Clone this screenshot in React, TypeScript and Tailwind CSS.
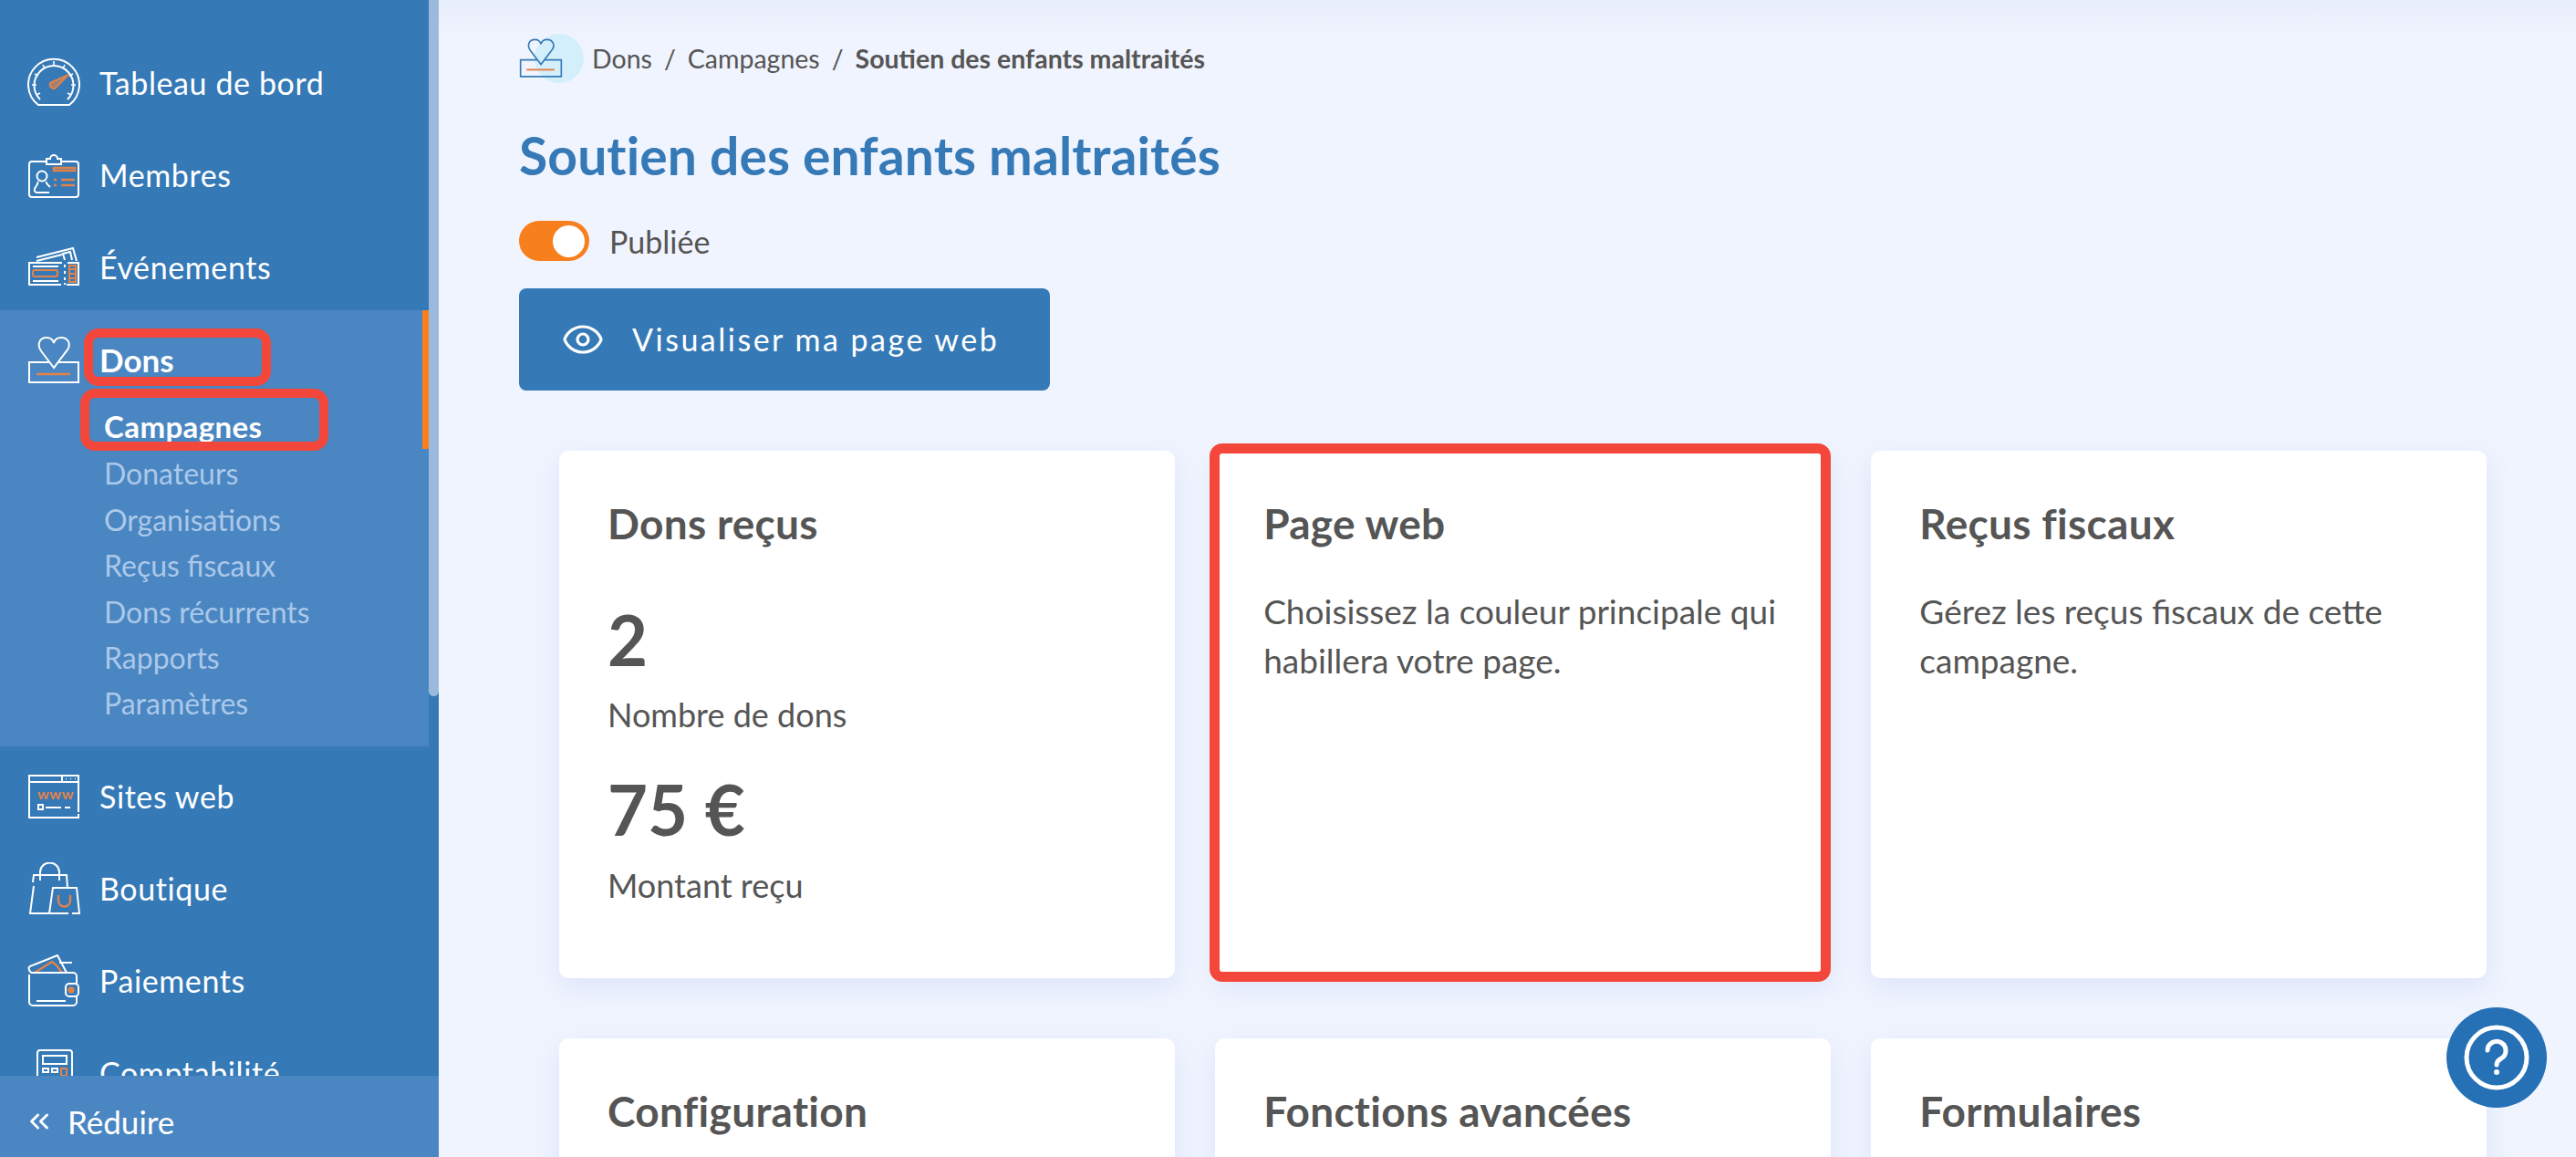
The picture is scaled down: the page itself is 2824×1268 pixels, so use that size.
import { ChevronsLeft, Eye } from 'lucide-react';

const ORANGE = '#e2834a';

function GaugeIcon() {
  return (
    <svg width="58" height="58" viewBox="0 0 58 58" fill="none" stroke="white" strokeWidth="2" className="shrink-0">
      <path d="M12 53 A28 28 0 1 1 46 53 Z" />
      <path d="M14 47 A21.5 21.5 0 1 1 44 47" />
      <path d="M29 5 V10 M17 9 l2 4 M41 9 l-2 4 M8 19 l4 2 M50 19 l-4 2 M5 31 h5 M53 31 h-5 M10 42 l4 -2 M48 42 l-4 -2" strokeWidth="1.6" />
      <path d="M25 29 L45 20 L30 35 A4.5 4.5 0 0 1 25 29 Z" stroke={ORANGE} fill={ORANGE} fillOpacity="0.6" />
    </svg>
  );
}

function BadgeIcon() {
  return (
    <svg width="58" height="58" viewBox="0 0 58 58" fill="none" stroke="white" strokeWidth="2" className="shrink-0">
      <path d="M20 14 H5 a3 3 0 0 0 -3 3 V50 a3 3 0 0 0 3 3 H53 a3 3 0 0 0 3 -3 V17 a3 3 0 0 0 -3 -3 H38" />
      <path d="M21 17 V11 H25 a4 4 0 0 1 8 0 H37 V17 Z" />
      <circle cx="16" cy="30" r="5.5" />
      <path d="M11 36 C13 38 9 41 8 44 C7 47 9 48 11 48 H24 M21 36 C20 38 23 40 25 42" />
      <g stroke={ORANGE} strokeWidth="2.4">
        <rect x="29" y="21" width="23" height="3" />
        <path d="M37 34 H52 M37 40 H52 M29 34 h3 M29 40 h3" />
      </g>
    </svg>
  );
}

function TicketIcon() {
  return (
    <svg width="58" height="58" viewBox="0 0 58 58" fill="none" stroke="white" strokeWidth="2" className="shrink-0">
      <path d="M10 18 L50 8 L54 22 M41 21 L39 14 L47 12 L49 21 M10 22 L38 15" />
      <path d="M38 24 H2 V48 H37 M43 48 H56 V24 H44" />
      <path d="M6 44 H34 M6 28 H34 M41 26 V29 M41 33 V36 M41 40 V43 M41 46 V48" />
      <rect x="6" y="32" width="27" height="7" rx="2" stroke={ORANGE} />
      <path d="M46 27 H53 V45 H46 Z M46 31 H53 M46 36 H53 M46 41 H53" stroke={ORANGE} />
    </svg>
  );
}

function DonationIcon({ color = 'white' }: { color?: string }) {
  return (
    <svg width="58" height="58" viewBox="0 0 58 58" fill="none" stroke={color} strokeWidth="2" className="h-full w-full">
      <path d="M29 37 L16 20 C9 11 14 4 21 4 C25 4 28 6 29 10 C30 6 33 4 37 4 C44 4 50 11 42 20 Z" />
      <path d="M24 31 H2 V53 H56 V31 H34" />
      <path d="M10 44 H47" stroke={ORANGE} strokeWidth="2.4" />
    </svg>
  );
}

function WebIcon() {
  return (
    <svg width="58" height="58" viewBox="0 0 58 58" fill="none" stroke="white" strokeWidth="2" className="shrink-0">
      <path d="M56 46 V6 H2 V52 H56 V48 M2 13 H56 M38 6 V13" />
      <path d="M42 9.5 h1 M47 9.5 h1 M52 9.5 h1" strokeWidth="1.6" />
      <text x="11" y="32" fill={ORANGE} stroke="none" fontSize="16" fontWeight="700" fontFamily="Lato, sans-serif" letterSpacing="0.5">www</text>
      <rect x="12" y="38" width="5" height="5" />
      <path d="M20 41 H37 M41 41 H47" />
    </svg>
  );
}

function BagIcon() {
  return (
    <svg width="58" height="58" viewBox="0 0 58 58" fill="none" stroke="white" strokeWidth="2" className="shrink-0">
      <path d="M7 28 L3 58 H45 M49 58 H57 L54 30 H28 L24 58 M44 30 L43 16 H7 L6 24" transform="translate(0 -2)" />
      <path d="M14 20 V11 a10 10 0 0 1 21 0 V20" />
      <path d="M34 36 V42 a6 6 0 0 0 13 0 V36" stroke={ORANGE} strokeWidth="2.4" />
    </svg>
  );
}

function WalletIcon() {
  return (
    <svg width="58" height="58" viewBox="0 0 58 58" fill="none" stroke="white" strokeWidth="2" className="shrink-0">
      <path d="M4 20 C-1 14 2 13 8 11 L33 1 L43 20 M35 9 H49" />
      <path d="M8 20 L27 8 L32 12 L38 20" stroke={ORANGE} strokeWidth="2.4" />
      <path d="M2 22 V52 a4 4 0 0 0 4 4 H50 a4 4 0 0 0 4 -4 V46 M54 32 V24 a4 4 0 0 0 -4 -4 H4" />
      <rect x="42" y="32" width="14" height="14" rx="4" />
      <circle cx="48" cy="39" r="2.6" fill={ORANGE} stroke={ORANGE} />
      <path d="M10 51 H42" />
    </svg>
  );
}

function CalcIcon() {
  return (
    <svg width="58" height="58" viewBox="0 0 58 58" fill="none" stroke="white" strokeWidth="2" className="shrink-0">
      <rect x="11" y="4" width="38" height="50" rx="3" />
      <rect x="17" y="10" width="26" height="9" />
      <path d="M17 28 V24 H23 V28 Z M27 28 V24 H33 V28 Z" />
      <path d="M37 32 V24 H43 V32 Z" stroke={ORANGE} />
    </svg>
  );
}

const topItems = [
  { label: 'Tableau de bord', icon: GaugeIcon },
  { label: 'Membres', icon: BadgeIcon },
  { label: 'Événements', icon: TicketIcon },
];

const bottomItems = [
  { label: 'Sites web', icon: WebIcon },
  { label: 'Boutique', icon: BagIcon },
  { label: 'Paiements', icon: WalletIcon },
  { label: 'Comptabilité', icon: CalcIcon },
];

const subItems = ['Donateurs', 'Organisations', 'Reçus fiscaux', 'Dons récurrents', 'Rapports', 'Paramètres'];

function NavItem({ label, icon: Icon }: { label: string; icon: () => React.ReactElement }) {
  return (
    <a className="flex h-[101px] shrink-0 items-center gap-[21px] pl-[30px] pt-[6px] text-[34px] tracking-[0.6px] text-white">
      <Icon />
      <span>{label}</span>
    </a>
  );
}

function Sidebar() {
  return (
    <aside className="relative flex h-full w-[481px] shrink-0 flex-col overflow-hidden bg-[#3579b7]">
      <nav className="min-h-0 flex-1 overflow-hidden pt-[37px] pr-[11px]">
        {topItems.map((item) => (
          <NavItem key={item.label} {...item} />
        ))}

        {/* Dons, open */}
        <div className="relative h-[478px] bg-[#4a86c1]">
          <div className="absolute right-0 top-0 h-[152px] w-[7px] bg-[#f77f1d]" />
          <div className="flex h-[103px] items-center gap-[21px] pl-[30px] pt-[6px] text-[35px] font-bold text-white">
            <span className="h-[58px] w-[58px] shrink-0">
              <DonationIcon />
            </span>
            <span>Dons</span>
          </div>
          <div className="pl-[114px] text-[32px] leading-[50.4px] text-[#abc8ea]">
            <div className="-mt-[1px] text-[33px] font-bold tracking-[0.4px] text-white">Campagnes</div>
            <div className="pt-[2px]">
              {subItems.map((s) => (
                <div key={s}>{s}</div>
              ))}
            </div>
          </div>
          {/* annotation boxes */}
          <div className="absolute left-[92px] top-[20px] h-[63px] w-[205px] rounded-[16px] border-[10px] border-[#f4473b]" />
          <div className="absolute left-[88px] top-[86px] h-[68px] w-[272px] rounded-[16px] border-[10px] border-[#f4473b]" />
        </div>

        <div className="h-[1px]" />
        {bottomItems.map((item) => (
          <NavItem key={item.label} {...item} />
        ))}
      </nav>

      {/* scrollbar */}
      <div className="absolute right-0 top-0 h-[763px] w-[11px] rounded-b-full bg-[#9ab9dc]" />

      <div className="relative flex h-[89px] shrink-0 items-center bg-[#4a86c1] pl-[26px] pt-[11px] text-[35px] text-white">
        <ChevronsLeft size={34} strokeWidth={2} />
        <span className="ml-[14px]">Réduire</span>
      </div>
    </aside>
  );
}

function Card({ title, children, highlighted }: { title: string; children?: React.ReactNode; highlighted?: boolean }) {
  return (
    <div className="relative h-[578px] rounded-[10px] bg-white px-[53px] pt-[55px] shadow-[0_10px_30px_rgba(80,120,220,0.12)]">
      <h2 className="text-[46px] font-bold leading-[50px] tracking-[0.3px] text-[#555555]">{title}</h2>
      {children}
      {highlighted && (
        <div className="absolute -bottom-[4px] -top-[8px] -left-[6px] right-0 rounded-[14px] border-[11px] border-[#f4473b]" />
      )}
    </div>
  );
}

function Body({ children }: { children: React.ReactNode }) {
  return <p className="mt-[44px] text-[37px] leading-[54px] text-[#555555]">{children}</p>;
}

export default function App() {
  return (
    <div className="flex h-screen w-full overflow-hidden bg-[#f0f4fe] font-['Lato','Noto_Sans',sans-serif]">
      <Sidebar />
      <main className="relative min-w-0 flex-1 overflow-hidden pl-[88px] pt-[37px]">
        <div className="absolute inset-x-0 top-0 h-[40px] bg-gradient-to-b from-[#e8edfb] to-transparent" />

        <div className="relative flex h-[54px] items-center text-[28.5px] text-[#555555]">
          <span className="relative mr-[32px] h-[48px] w-[48px] shrink-0">
            <span className="absolute -top-[3px] left-[17px] h-[54px] w-[54px] rounded-full bg-[#d4effc]" />
            <span className="absolute inset-0">
              <DonationIcon color="#3579b7" />
            </span>
          </span>
          <span>Dons</span>
          <span className="mx-[13px]">/</span>
          <span>Campagnes</span>
          <span className="mx-[13px]">/</span>
          <span className="font-bold">Soutien des enfants maltraités</span>
        </div>

        <h1 className="relative mt-[44px] text-[57px] font-bold leading-[70px] tracking-[0.1px] text-[#3579b7]">
          Soutien des enfants maltraités
        </h1>

        <div className="mt-[37px] flex h-[44px] items-center gap-[22px]">
          <span className="flex h-[44px] w-[77px] items-center justify-end rounded-full bg-[#f77f1d] pr-[5px]">
            <span className="h-[35px] w-[35px] rounded-full bg-white" />
          </span>
          <span className="text-[34px] text-[#555555]">Publiée</span>
        </div>

        <button className="mt-[30px] flex h-[112px] w-[582px] items-center gap-[30px] rounded-[8px] bg-[#3579b7] pl-[46px] text-[34px] tracking-[2.5px] text-white">
          <Eye size={48} strokeWidth={1.6} />
          <span className="-mt-[2px]">Visualiser ma page web</span>
        </button>

        <div className="ml-[44px] mr-[98px] mt-[66px] grid grid-cols-3 gap-x-[44.5px] gap-y-[66px]">
          <Card title="Dons reçus">
            <div className="mt-[62px] text-[76px] font-bold leading-[80px] text-[#555555]">2</div>
            <div className="mt-[15px] text-[36px] leading-[54px] text-[#555555]">Nombre de dons</div>
            <div className="mt-[37px] text-[76px] font-bold leading-[80px] text-[#555555]">75 €</div>
            <div className="mt-[16px] text-[36px] leading-[54px] text-[#555555]">Montant reçu</div>
          </Card>
          <Card title="Page web" highlighted>
            <Body>Choisissez la couleur principale qui habillera votre page.</Body>
          </Card>
          <Card title="Reçus fiscaux">
            <Body>Gérez les reçus fiscaux de cette campagne.</Body>
          </Card>
          <Card title="Configuration" />
          <Card title="Fonctions avancées" />
          <Card title="Formulaires" />
        </div>

        {/* help bubble */}
        <button className="fixed bottom-[54px] right-[32px] flex h-[110px] w-[110px] items-center justify-center rounded-full bg-[#2670b6]">
          <svg width="72" height="72" viewBox="0 0 72 72" fill="none" stroke="white" strokeWidth="5" strokeLinecap="round">
            <circle cx="36" cy="36" r="33" />
            <path d="M26 28 a10 10 0 1 1 15 9 c-3 2 -5 3 -5 7" />
            <circle cx="36" cy="52" r="2" fill="white" strokeWidth="2" />
          </svg>
        </button>
      </main>
    </div>
  );
}
